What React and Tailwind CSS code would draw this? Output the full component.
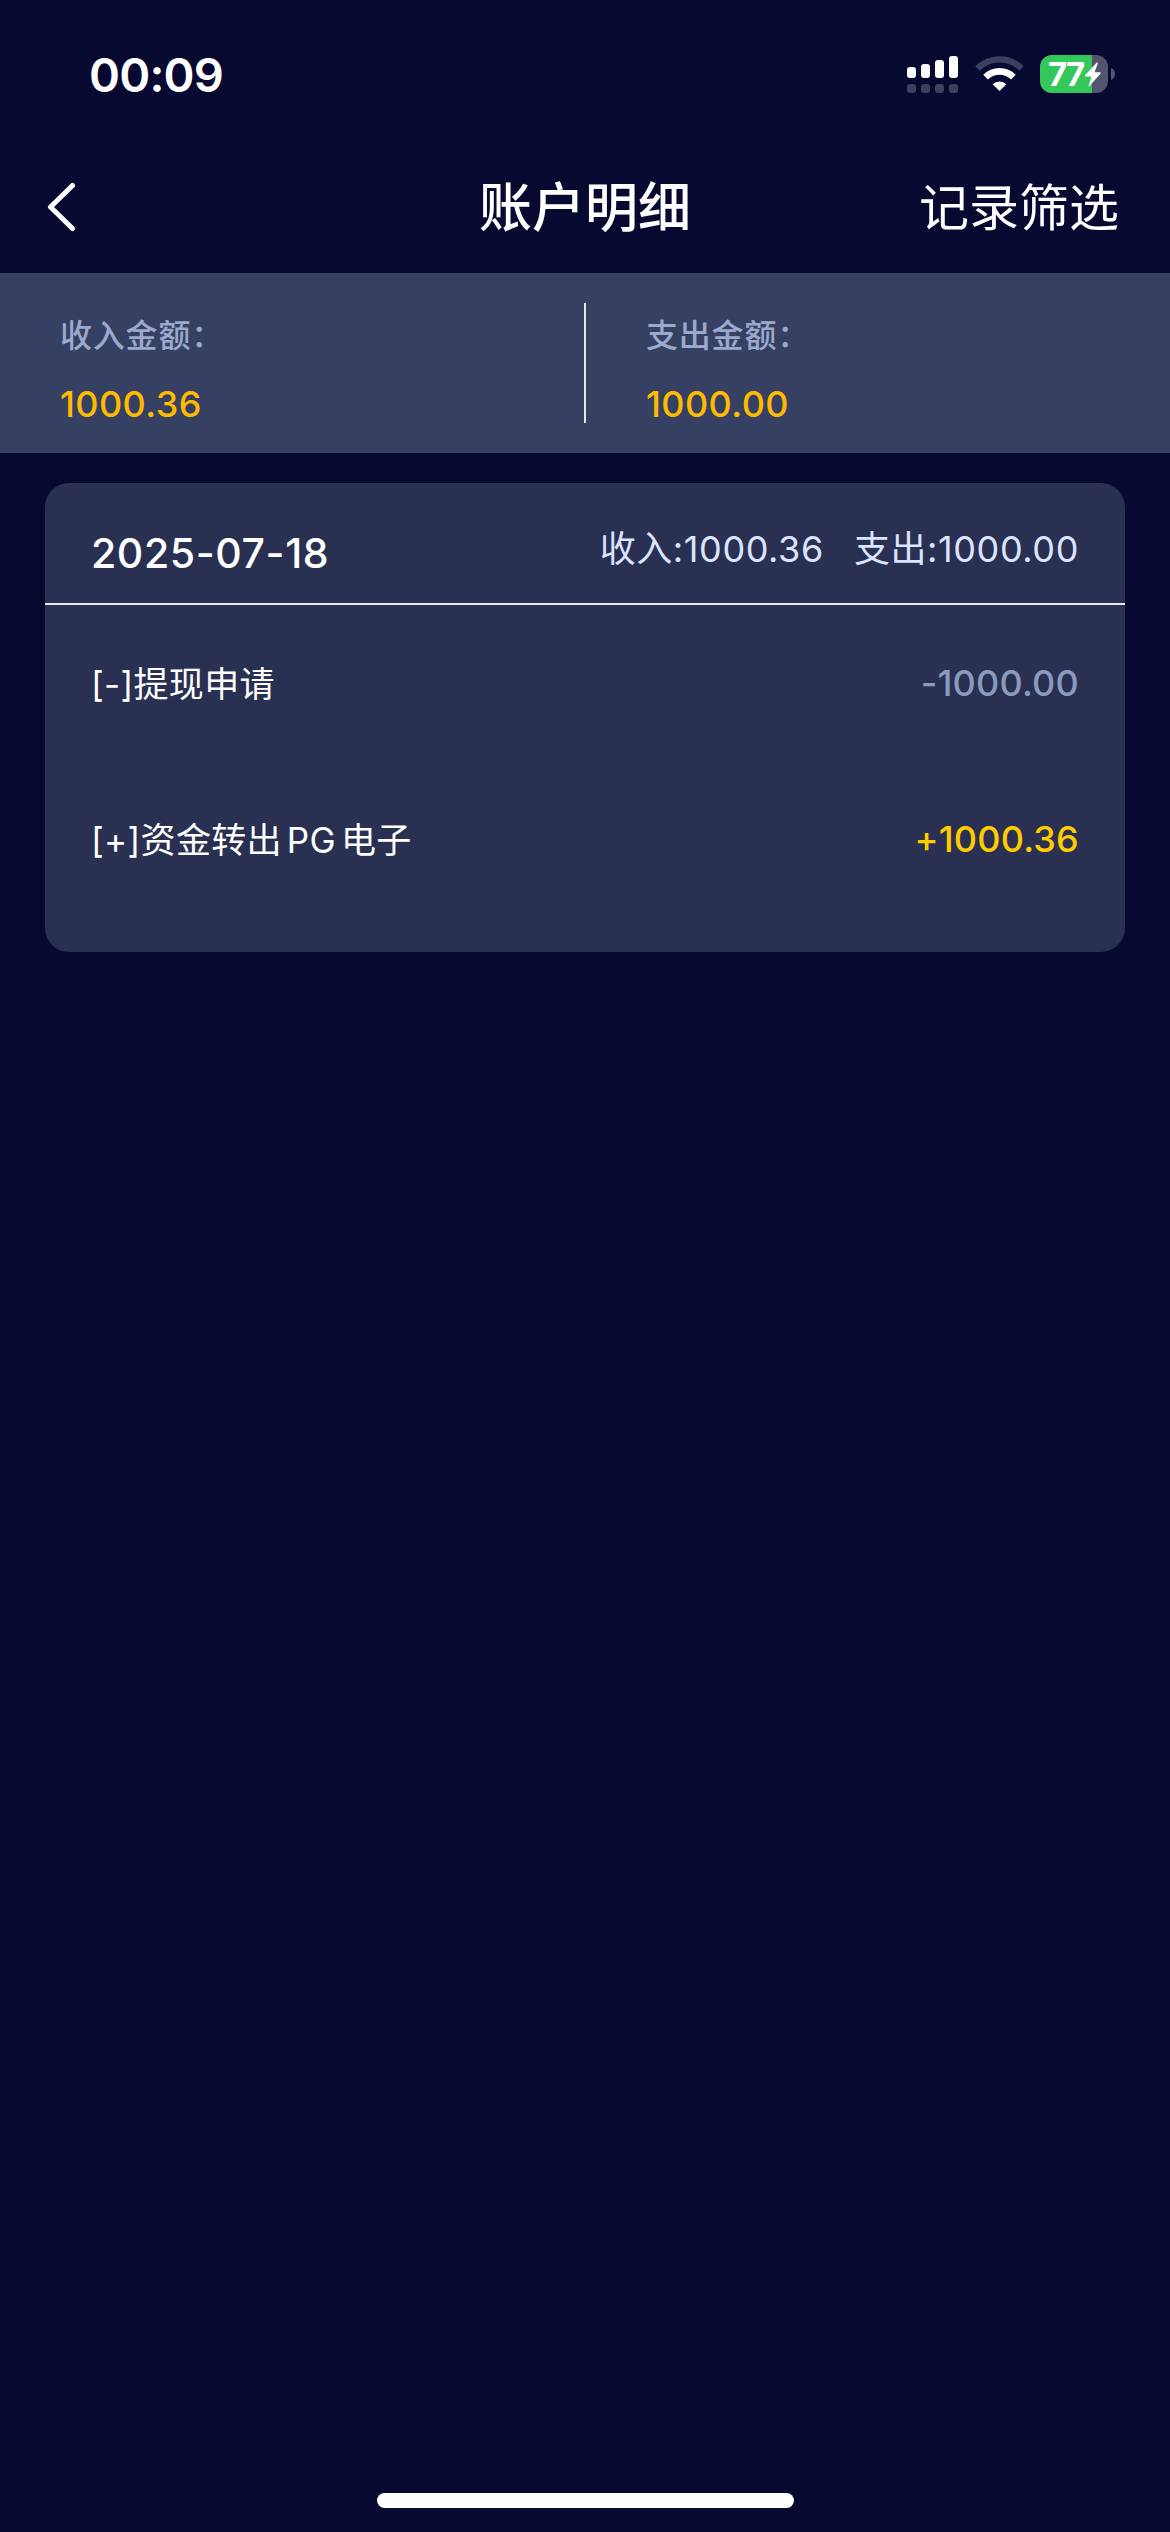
import React from "react";

const summary = [
  { label: "收入金额：", value: "1000.36" },
  { label: "支出金额：", value: "1000.00" },
];

const records = [
  { id: 1, parts: ["[-]提现申请"], amount: "-1000.00", income: false },
  { id: 2, parts: ["[+]资金转出", "PG", "电子"], amount: "+1000.36", income: true },
];

function SignalIcon() {
  return (
    <svg width="51" height="38" viewBox="0 0 51 38" fill="#fff">
      <rect x="0" y="11" width="9" height="11" rx="3" />
      <rect x="14" y="8" width="9" height="14" rx="3" />
      <rect x="28" y="4" width="9" height="18" rx="3" />
      <rect x="42" y="0" width="9" height="22" rx="3" />
      <g opacity="0.22">
        <rect x="0" y="28" width="9" height="9" rx="3" />
        <rect x="14" y="28" width="9" height="9" rx="3" />
        <rect x="28" y="28" width="9" height="9" rx="3" />
        <rect x="42" y="28" width="9" height="9" rx="3" />
      </g>
    </svg>
  );
}

function WifiIcon() {
  return (
    <svg width="49" height="37" viewBox="0 0 49 37" fill="none">
      <path d="M2.5 13.5 A31 31 0 0 1 46.5 13.5" stroke="#fff" strokeOpacity="0.22" strokeWidth="6.4" />
      <path d="M10.6 22.2 A19.6 19.6 0 0 1 38.4 22.2" stroke="#fff" strokeWidth="6.6" />
      <path d="M24.5 36 L17.6 29.3 A10 10 0 0 1 31.4 29.3 Z" fill="#fff" />
    </svg>
  );
}

function BatteryIcon() {
  return (
    <div className="flex items-center gap-[3px]">
      <div className="relative flex h-[38px] w-[68px] items-center overflow-hidden rounded-[12px] bg-[#54546f]">
        <div className="h-full w-[52px] bg-[#34c759]" />
        <span className="absolute left-[8px] text-[33px] leading-[38px] font-bold tracking-[-1.8px] text-white">
          77
        </span>
        <svg className="absolute top-[7px] left-[44px]" width="18" height="25" viewBox="0 0 18 25" fill="#fff">
          <path d="M12.8 0.6 L1 13.2 Q0.4 14.4 1.6 14.4 L7.6 14.4 L4.6 23.4 Q4.4 24.8 5.6 24 L16.6 11.6 Q17.4 10.3 16 10.2 L10.6 10.2 L13.8 1.4 Q13.8 0 12.8 0.6 Z" />
        </svg>
      </div>
      <svg width="4" height="12" viewBox="0 0 4 12" fill="#54546f">
        <path d="M0 0 C5.4 2 5.4 10 0 12 Z" />
      </svg>
    </div>
  );
}

function StatusBar() {
  return (
    <div className="flex h-[150px] items-start justify-between pt-[55px] pr-[55px] pl-[89px]">
      <span className="text-[47px] leading-[39px] font-semibold tracking-[-0.8px] text-white">00:09</span>
      <div className="flex items-start">
        <div className="mr-[17px] pt-px">
          <SignalIcon />
        </div>
        <div className="mr-[16px]">
          <WifiIcon />
        </div>
        <BatteryIcon />
      </div>
    </div>
  );
}

function NavBar() {
  return (
    <div className="grid h-[123px] grid-cols-3 items-center pb-[10px] text-white">
      <svg className="ml-[47px]" width="29" height="50" viewBox="0 0 29 50" fill="none">
        <path
          d="M25.5 3.5 L3.5 25 L25.5 46.5"
          stroke="#fff"
          strokeWidth="5"
          strokeLinecap="round"
          strokeLinejoin="round"
        />
      </svg>
      <h1 className="pt-[2px] text-center text-[53px] leading-[60px] font-medium">账户明细</h1>
      <button className="pt-[3px] pr-[51px] text-right text-[50px] leading-[60px]">记录筛选</button>
    </div>
  );
}

function App() {
  return (
    <div className="flex h-[2532px] w-[1170px] flex-col bg-[#070931] font-['Inter','Noto_Sans_CJK_SC',sans-serif]">
      <StatusBar />
      <NavBar />

      <div className="flex h-[180px] items-center bg-[#364063]">
        {summary.map((item, index) => (
          <div
            key={item.label}
            className={`flex h-[120px] flex-col pl-[60px] ${
              index === 0 ? "w-[586px] border-r-2 border-[#e8e8e8]" : "flex-1"
            }`}
          >
            <span className="mt-[11px] text-[32px] leading-[44px] font-medium tracking-[0.8px] text-[#9ba9cc]">
              {item.label}
            </span>
            <span className="mt-[24px] text-[36px] leading-[44px] font-medium tracking-[0.4px] text-[#ffbb00]">
              {item.value}
            </span>
          </div>
        ))}
      </div>

      <div className="mx-[45px] mt-[30px] flex h-[469px] flex-col rounded-[24px] bg-[#2a3051]">
        <div className="flex h-[122px] items-center justify-between border-b-2 border-[#e6e6e6] px-[46px]">
          <span className="pt-[20px] text-[41px] leading-[50px] font-medium tracking-[0.6px] text-white">
            2025-07-18
          </span>
          <div className="flex gap-[30px] pt-[12px] text-[36px] leading-[50px] tracking-[0.6px] text-[#dce4ff]">
            <span>收入:1000.36</span>
            <span>支出:1000.00</span>
          </div>
        </div>
        {records.map((record) => (
          <div key={record.id} className="flex h-[156px] items-center justify-between px-[46px] text-[36px]">
            <div className="flex gap-[5px] pt-[2px] text-[35px] tracking-[0.3px] text-white">
              {record.parts.map((part) => (
                <span key={part}>{part}</span>
              ))}
            </div>
            <span
              className={`font-medium tracking-[0.2px] ${record.income ? "text-[#ffcc00]" : "text-[#8b9abf]"}`}
            >
              {record.amount}
            </span>
          </div>
        ))}
      </div>

      <div className="mx-auto mt-auto mb-[24px] h-[15px] w-[417px] rounded-full bg-white" />
    </div>
  );
}

export default App;
